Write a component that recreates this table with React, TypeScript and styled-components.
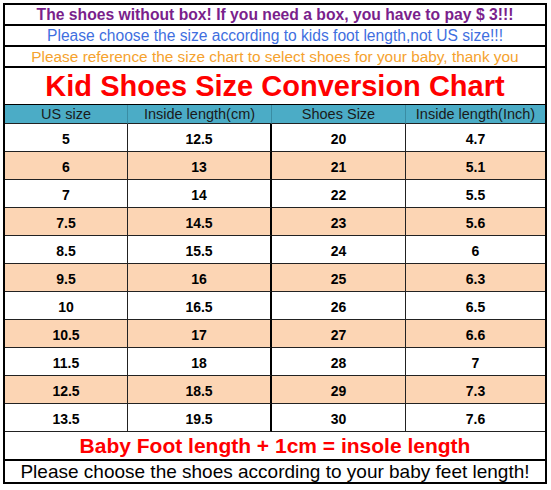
import React from 'react';
import styled, { createGlobalStyle } from 'styled-components';

const GlobalStyle = createGlobalStyle`
	html, body {
		margin: 0;
		padding: 0;
		background: #ffffff;
	}
	body {
		font-family: 'Liberation Sans', Arial, sans-serif;
	}
`;

type SizeRow = [string, string, string, string];

const sizes: SizeRow[] = [
	['5', '12.5', '20', '4.7'],
	['6', '13', '21', '5.1'],
	['7', '14', '22', '5.5'],
	['7.5', '14.5', '23', '5.6'],
	['8.5', '15.5', '24', '6'],
	['9.5', '16', '25', '6.3'],
	['10', '16.5', '26', '6.5'],
	['10.5', '17', '27', '6.6'],
	['11.5', '18', '28', '7'],
	['12.5', '18.5', '29', '7.3'],
	['13.5', '19.5', '30', '7.6'],
];

const headers = ['US size', 'Inside length(cm)', 'Shoes Size', 'Inside length(Inch)'];

export default function App() {
	return (
		<>
			<GlobalStyle />
			<Page>
				<Sheet>
					<Banner $h={19} $color='#7a1f8c' $size={15.7} $bold>
						The shoes without box! If you need a box, you have to pay $ 3!!!
					</Banner>
					<Banner $h={19} $color='#3f6fe0' $size={15.6}>
						Please choose the size according to kids foot length,not US size!!!
					</Banner>
					<Banner $h={19} $color='#f5a22e' $size={15.4}>
						Please reference the size chart to select shoes for your baby, thank you
					</Banner>
					<Banner $h={36} $color='#ff0000' $size={29} $bold $line={1}>
						Kid Shoes Size Conversion Chart
					</Banner>
					<Grid>
						{headers.map((h, i) => (
							<HeadCell key={h} $col={i}>
								{h}
							</HeadCell>
						))}
						{sizes.map((row, r) =>
							row.map((v, i) => (
								<DataCell key={r + '-' + i} $col={i} $peach={r % 2 === 1}>
									{v}
								</DataCell>
							))
						)}
					</Grid>
					<Banner $h={27} $color='#ff0000' $size={21} $bold>
						Baby Foot length + 1cm = insole length
					</Banner>
					<Banner $h={21} $color='#000000' $size={19} $line={0}>
						Please choose the shoes according to your baby feet length!
					</Banner>
				</Sheet>
			</Page>
		</>
	);
}

const Page = styled.div`
	padding: 3px;
`;

const Sheet = styled.div`
	width: 544px;
	box-sizing: border-box;
	border: 2px solid #000;
	display: flex;
	flex-direction: column;
`;

const Banner = styled.div<{ $h: number; $color: string; $size: number; $bold?: boolean; $line?: number }>`
	height: ${p => p.$h}px;
	display: flex;
	align-items: center;
	justify-content: center;
	white-space: nowrap;
	color: ${p => p.$color};
	font-size: ${p => p.$size}px;
	font-weight: ${p => (p.$bold ? 700 : 400)};
	border-bottom: ${p => (p.$line === undefined ? 2 : p.$line)}px solid #000;
`;

const colBorders = ['1px solid #222', '2px solid #000', '1px solid #222', 'none'];

const Grid = styled.div`
	display: grid;
	grid-template-columns: 123px 144px 134px 1fr;
`;

const HeadCell = styled.div<{ $col: number }>`
	height: 18px;
	background: #4bacc6;
	color: #1a1a1a;
	font-size: 14.5px;
	display: flex;
	align-items: center;
	justify-content: center;
	border-bottom: 1px solid #222;
	border-right: ${p => (p.$col === 3 ? 'none' : '1px solid #3a8ca3')};
`;

const DataCell = styled.div<{ $col: number; $peach: boolean }>`
	height: 28px;
	padding-top: 2px;
	box-sizing: border-box;
	background: ${p => (p.$peach ? '#fcd5b4' : '#ffffff')};
	color: #000;
	font-size: 14px;
	font-weight: 700;
	display: flex;
	align-items: center;
	justify-content: center;
	border-bottom: 1px solid #222;
	border-right: ${p => colBorders[p.$col]};
`;
